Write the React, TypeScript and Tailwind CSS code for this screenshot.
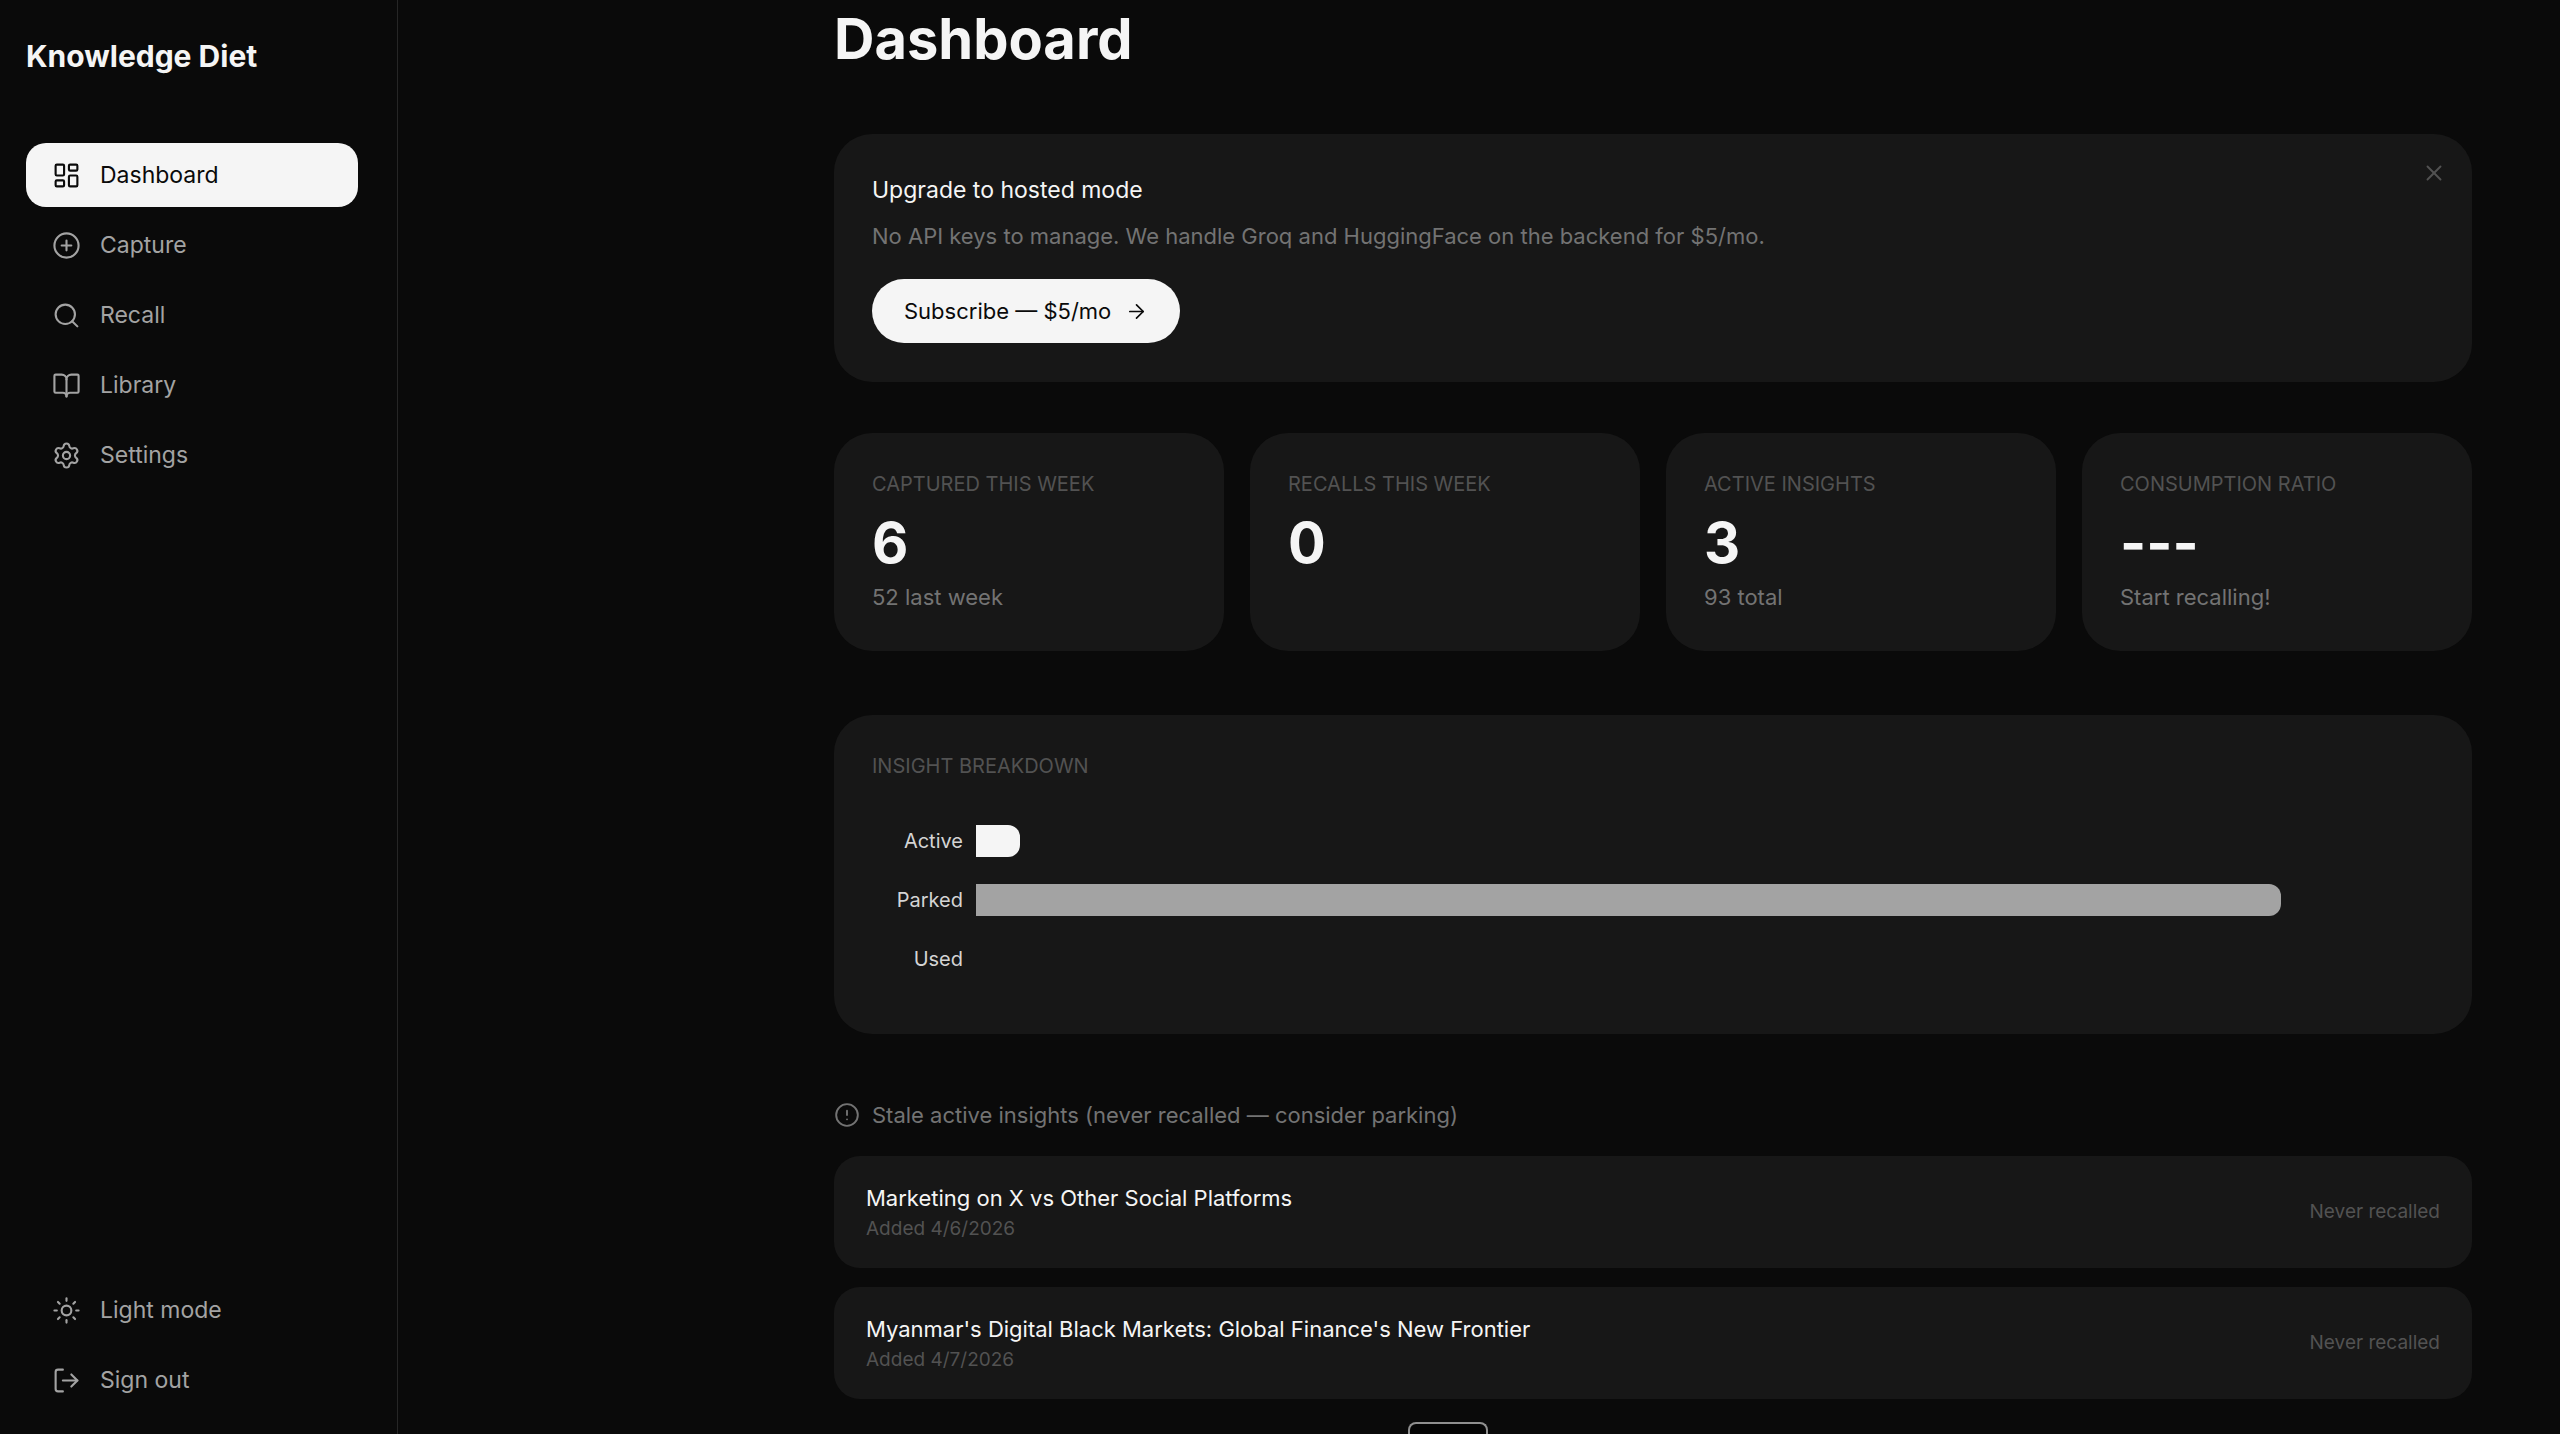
import { useState } from "react";
import {
  ArrowRight,
  BookOpen,
  CircleAlert,
  CirclePlus,
  LayoutDashboard,
  LogOut,
  Search,
  Settings,
  Sun,
  X,
  type LucideIcon,
} from "lucide-react";

const navItems: { label: string; icon: LucideIcon }[] = [
  { label: "Dashboard", icon: LayoutDashboard },
  { label: "Capture", icon: CirclePlus },
  { label: "Recall", icon: Search },
  { label: "Library", icon: BookOpen },
  { label: "Settings", icon: Settings },
];

const stats = [
  { label: "Captured this week", value: "6", note: "52 last week" },
  { label: "Recalls this week", value: "0", note: "" },
  { label: "Active insights", value: "3", note: "93 total" },
  { label: "Consumption ratio", value: "---", note: "Start recalling!" },
];

const breakdown = [
  { label: "Active", count: 3, color: "bg-neutral-100" },
  { label: "Parked", count: 90, color: "bg-[#a3a3a3]" },
  { label: "Used", count: 0, color: "bg-neutral-600" },
];
const AXIS_MAX = 100;

const staleInsights = [
  { title: "Marketing on X vs Other Social Platforms", added: "4/6/2026" },
  { title: "Myanmar's Digital Black Markets: Global Finance's New Frontier", added: "4/7/2026" },
];

const itemBase = "flex h-16 w-full items-center gap-[19px] rounded-[20px] px-[26px] text-[23px]";

function Sidebar() {
  return (
    <aside className="sticky top-0 flex h-screen w-[398px] shrink-0 flex-col border-r border-[#262626] pt-9 pr-[39px] pb-[22px] pl-[26px]">
      <div className="text-[30px] leading-10 font-bold text-neutral-100">Knowledge Diet</div>
      <nav className="mt-[67px] flex flex-col gap-[6px]">
        {navItems.map(({ label, icon: Icon }, i) => (
          <a
            key={label}
            href="#"
            aria-current={i === 0 ? "page" : undefined}
            className={`${itemBase} ${i === 0 ? "bg-neutral-100 text-[#0a0a0a]" : "text-[#a3a3a3]"}`}
          >
            <Icon className="size-[29px]" strokeWidth={1.75} />
            {label}
          </a>
        ))}
      </nav>
      <div className="mt-auto flex flex-col gap-[6px]">
        <button type="button" className={`${itemBase} text-[#a3a3a3]`}>
          <Sun className="size-[29px]" strokeWidth={1.75} />
          Light mode
        </button>
        <button type="button" className={`${itemBase} text-[#a3a3a3]`}>
          <LogOut className="size-[29px]" strokeWidth={1.75} />
          Sign out
        </button>
      </div>
    </aside>
  );
}

function UpgradeCard({ onDismiss }: { onDismiss: () => void }) {
  return (
    <section className="relative mb-[51px] rounded-[38px] bg-[#171717] px-[38px] pt-[38px] pb-[39px]">
      <h2 className="text-[23px] leading-9 text-neutral-100">Upgrade to hosted mode</h2>
      <p className="mt-[10px] leading-9 text-[#737373]">
        No API keys to manage. We handle Groq and HuggingFace on the backend for $5/mo.
      </p>
      <button
        type="button"
        className="mt-[25px] flex h-16 items-center gap-[14px] rounded-full bg-neutral-100 px-8 text-[#0a0a0a]"
      >
        Subscribe — $5/mo
        <ArrowRight className="size-[23px]" strokeWidth={1.75} />
      </button>
      <button
        type="button"
        aria-label="Dismiss"
        onClick={onDismiss}
        className="absolute top-[26px] right-[25px] text-[#525252]"
      >
        <X className="size-[26px]" strokeWidth={1.75} />
      </button>
    </section>
  );
}

function StatCard({ label, value, note }: { label: string; value: string; note: string }) {
  return (
    <div className="rounded-[38px] bg-[#171717] p-[38px]">
      <div className="text-[20px] leading-[26px] text-[#525252] uppercase">{label}</div>
      <div className="mt-[14px] text-[56px] leading-[64px] font-bold text-neutral-100">{value}</div>
      {note && <div className="mt-[6px] leading-8 text-[#737373]">{note}</div>}
    </div>
  );
}

function Breakdown() {
  return (
    <section className="mt-16 rounded-[38px] bg-[#171717] px-[38px] pt-[38px] pb-[46px]">
      <h2 className="text-[20px] leading-[26px] text-[#525252] uppercase">Insight breakdown</h2>
      <div className="mt-8 pr-2">
        {breakdown.map(({ label, count, color }) => (
          <div key={label} className="flex h-[59px] items-center gap-[13px]">
            <div className="w-[91px] text-right text-[20px] text-[#d4d4d4]">{label}</div>
            <div className="flex-1">
              <div
                className={`h-8 rounded-r-[12px] ${color}`}
                style={{ width: `${(count / AXIS_MAX) * 100}%` }}
              />
            </div>
          </div>
        ))}
      </div>
    </section>
  );
}

function StaleInsights() {
  return (
    <section className="mt-[63px]">
      <h2 className="flex items-center gap-3 leading-9 text-[#737373]">
        <CircleAlert className="size-[26px]" strokeWidth={1.75} />
        Stale active insights (never recalled — consider parking)
      </h2>
      <ul className="mt-[23px] flex flex-col gap-[19px]">
        {staleInsights.map(({ title, added }) => (
          <li
            key={title}
            className="flex items-center justify-between rounded-[26px] bg-[#171717] px-8 py-[25px]"
          >
            <div>
              <div className="leading-[34px] text-neutral-100">{title}</div>
              <div className="text-[19px] leading-7 text-[#525252]">Added {added}</div>
            </div>
            <div className="text-[19px] text-[#525252]">Never recalled</div>
          </li>
        ))}
      </ul>
    </section>
  );
}

export default function App() {
  const [showUpgrade, setShowUpgrade] = useState(true);
  return (
    <div className="flex min-h-screen bg-[#0a0a0a] font-['Inter',sans-serif] text-[22px]">
      <Sidebar />
      <main className="flex min-w-0 flex-1 justify-end pt-[7px] pr-[88px] pl-10">
        <div className="w-full max-w-[1638px]">
          <h1 className="mb-[63px] text-[56px] leading-[64px] font-bold text-neutral-100">Dashboard</h1>
          {showUpgrade && <UpgradeCard onDismiss={() => setShowUpgrade(false)} />}
          <div className="grid grid-cols-4 gap-[26px]">
            {stats.map((s) => (
              <StatCard key={s.label} {...s} />
            ))}
          </div>
          <Breakdown />
          <StaleInsights />
        </div>
      </main>
      <div className="fixed bottom-0 left-[55%] h-3 w-20 rounded-t-[8px] border-2 border-b-0 border-[#8f8f8f] bg-[#050505]" />
    </div>
  );
}
